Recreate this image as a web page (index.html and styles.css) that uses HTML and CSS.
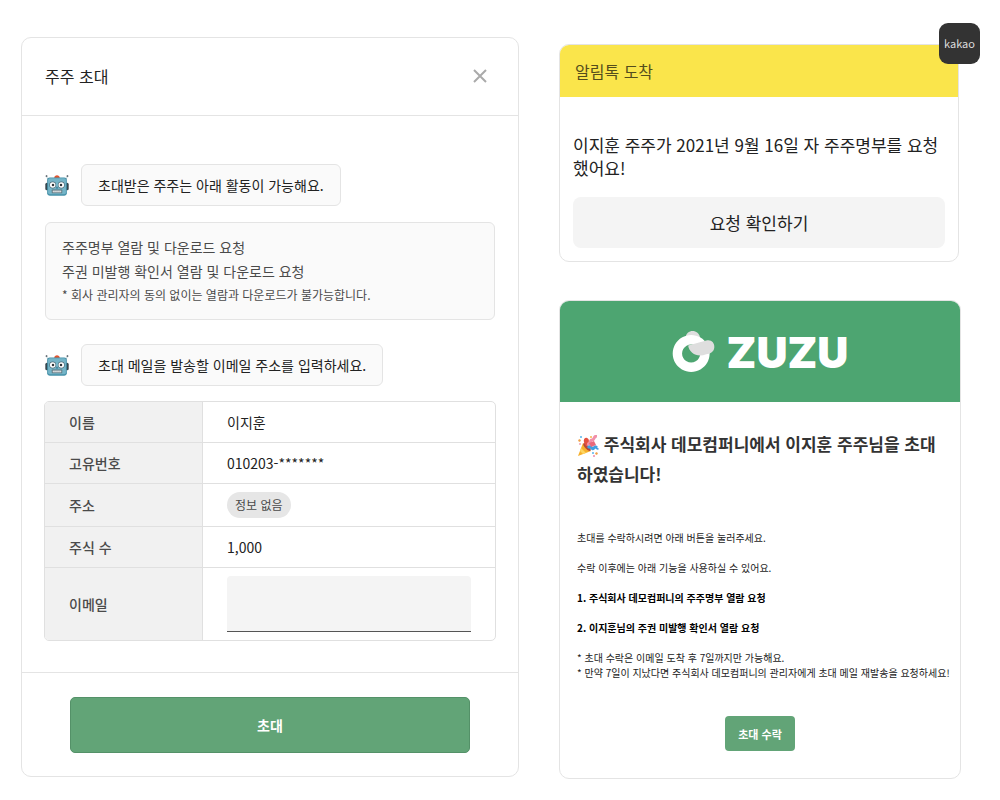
FILE: index.html
```
<!DOCTYPE html>
<html lang="ko">
<head>
    <meta charset="UTF-8">
    <meta name="viewport" content="width=device-width, initial-scale=1.0">
    <title>주주 초대</title>
    <link rel="stylesheet" href="styles.css">
</head>
<body>
    <!-- Shared robot avatar -->
    <svg class="sprite" aria-hidden="true">
        <symbol id="robot" viewBox="12 22 78 74">
            <circle cx="17" cy="30" r="3" fill="#37404a"/>
            <circle cx="85" cy="30" r="3" fill="#37404a"/>
            <path d="M17 31l5 12M85 31l-5 12" stroke="#9fb4bd" stroke-width="2"/>
            <rect x="13" y="52" width="10" height="24" rx="5" fill="#37474f"/>
            <rect x="79" y="52" width="10" height="24" rx="5" fill="#37474f"/>
            <path d="M42 36c0-12 18-12 18 0z" fill="#e2552f"/>
            <rect x="19" y="35" width="64" height="59" rx="8" fill="#4590a8"/>
            <rect x="22" y="37" width="58" height="52" rx="6" fill="#74b4c7"/>
            <circle cx="37" cy="59" r="11" fill="#4f6f7c"/>
            <circle cx="65" cy="59" r="11" fill="#4f6f7c"/>
            <circle cx="37" cy="59" r="9" fill="#fff"/>
            <circle cx="65" cy="59" r="9" fill="#fff"/>
            <circle cx="38" cy="59" r="4" fill="#30363b"/>
            <circle cx="64" cy="59" r="4" fill="#30363b"/>
            <path d="M51 63l4 7h-8z" fill="#35788f"/>
            <rect x="34" y="74" width="34" height="12" rx="2" fill="#5b7680"/>
            <rect x="37" y="77" width="28" height="6" fill="#d9dddf"/>
            <path d="M44 77v6M51 77v6M58 77v6" stroke="#8d999e" stroke-width="1"/>
        </symbol>
    </svg>

    <main class="page">
        <section class="card invite">
            <header class="invite-header">
                <h1>주주 초대</h1>
                <button type="button" class="close-btn" aria-label="닫기">
                    <svg viewBox="0 0 14 14"><path d="M1 1l12 12M13 1L1 13"/></svg>
                </button>
            </header>

            <form id="invite-form" class="invite-body">
                <div class="message">
                    <svg class="avatar"><use href="#robot"/></svg>
                    <p class="bubble">초대받은 주주는 아래 활동이 가능해요.</p>
                </div>

                <div class="notice">
                    <p>주주명부 열람 및 다운로드 요청</p>
                    <p>주권 미발행 확인서 열람 및 다운로드 요청</p>
                    <p class="notice-small">* 회사 관리자의 동의 없이는 열람과 다운로드가 불가능합니다.</p>
                </div>

                <div class="message">
                    <svg class="avatar"><use href="#robot"/></svg>
                    <p class="bubble">초대 메일을 발송할 이메일 주소를 입력하세요.</p>
                </div>

                <table class="info">
                    <tbody>
                        <tr>
                            <th scope="row">이름</th>
                            <td>이지훈</td>
                        </tr>
                        <tr>
                            <th scope="row">고유번호</th>
                            <td>010203-*******</td>
                        </tr>
                        <tr>
                            <th scope="row">주소</th>
                            <td><span class="tag">정보 없음</span></td>
                        </tr>
                        <tr>
                            <th scope="row">주식 수</th>
                            <td>1,000</td>
                        </tr>
                        <tr>
                            <th scope="row"><label for="email">이메일</label></th>
                            <td><input type="email" id="email" name="email"></td>
                        </tr>
                    </tbody>
                </table>
            </form>

            <footer class="invite-footer">
                <button type="submit" form="invite-form" class="submit-btn">초대</button>
            </footer>
        </section>

        <div class="side">
            <section class="card talk">
                <span class="kakao-badge">kakao</span>
                <h2 class="talk-header">알림톡 도착</h2>
                <div class="talk-body">
                    <p>이지훈 주주가 2021년 9월 16일 자 주주명부를 요청<br>했어요!</p>
                    <button type="button" class="talk-btn">요청 확인하기</button>
                </div>
            </section>

            <section class="card mail">
                <header class="mail-header">
                    <svg class="logo-mark" viewBox="36 30 128 128" aria-hidden="true">
                        <path d="M76 54C78 26 116 26 120 54z" fill="#dedede"/>
                        <path fill="#fff" fill-rule="evenodd" d="M93 45a55 55 0 1 0 .1 0zM93 73a27 27 0 1 1-.1 0z"/>
                        <path d="M84 76L138 61C153 57 163 68 162 81C161 96 148 101 138 102C112 112 88 100 84 76z" fill="#dedede"/>
                    </svg>
                    <span class="logo-text">ZUZU</span>
                </header>
                <div class="mail-body">
                    <h2>
                        <svg class="popper" viewBox="0 0 22 22" aria-hidden="true">
                            <path d="M6 8L1 21l13-5z" fill="#f6b02c"/>
                            <path d="M4 13l5 5-3 1-3-3z" fill="#fdd561"/>
                            <ellipse cx="10" cy="12" rx="2" ry="5" transform="rotate(-42 10 12)" fill="#b5483c"/>
                            <path d="M9 11C5 6 7 2 10 3s2 5 0 8" fill="#e4503f"/>
                            <path d="M10 9c5 1 2-4 5-4s1-4 5-4" fill="none" stroke="#f18fa9" stroke-width="3"/>
                            <path d="M11 13c3-4 4 3 6 0s3 1 4 0" fill="none" stroke="#409fe0" stroke-width="3"/>
                            <path d="M12 8l5-2 2 4-5 2z" fill="#e9697a"/>
                            <path d="M1 5l2-1 1 2-2 1zM19 17l2 1-1 2-2-1z" fill="#f0a047"/>
                            <circle cx="4" cy="2" r="1" fill="#55b4ec"/>
                            <circle cx="14" cy="2" r="1" fill="#f3b64b"/>
                            <circle cx="16" cy="18" r="1" fill="#55b4ec"/>
                            <circle cx="17" cy="21" r="1" fill="#ee89ad"/>
                            <circle cx="3" cy="9" r="1" fill="#f2a0b4"/>
                        </svg>
                        주식회사 데모컴퍼니에서 이지훈 주주님을 초대<br>하였습니다!
                    </h2>
                    <p>초대를 수락하시려면 아래 버튼을 눌러주세요.</p>
                    <p>수락 이후에는 아래 기능을 사용하실 수 있어요.</p>
                    <p class="strong">1. 주식회사 데모컴퍼니의 주주명부 열람 요청</p>
                    <p class="strong">2. 이지훈님의 주권 미발행 확인서 열람 요청</p>
                    <p>* 초대 수락은 이메일 도착 후 7일까지만 가능해요.<br>* 만약 7일이 지났다면 주식회사 데모컴퍼니의 관리자에게 초대 메일 재발송을 요청하세요!</p>
                    <button type="button" class="accept-btn">초대 수락</button>
                </div>
            </section>
        </div>
    </main>
</body>
</html>
```
FILE: styles.css
```
* {
    margin: 0;
    padding: 0;
    box-sizing: border-box;
}

body {
    font-family: "Noto Sans CJK KR", "Noto Sans", sans-serif;
    font-size: 14px;
    line-height: 24px;
    color: #222;
    background: #fff;
}

button,
input {
    font-family: inherit;
    border: none;
}

button {
    cursor: pointer;
}

.sprite {
    position: absolute;
    width: 0;
    height: 0;
}

.page {
    display: grid;
    grid-template-columns: minmax(0, 498fr) minmax(0, 402fr);
    gap: 40px;
    align-items: start;
    padding: 37px 39px 23px 21px;
}

.card {
    border: 1px solid #e4e4e4;
    border-radius: 10px;
    background: #fff;
}

/* Invite dialog */
.invite-header {
    display: flex;
    align-items: center;
    justify-content: space-between;
    padding: 26px 31px 27px 23px;
    border-bottom: 1px solid #e4e4e4;
}

.invite-header h1 {
    font-size: 16px;
    font-weight: 400;
}

.close-btn {
    width: 14px;
    height: 14px;
    background: none;
}

.close-btn svg {
    display: block;
    stroke: #aaa;
    stroke-width: 2;
}

.invite-body {
    padding: 48px 23px 31px;
}

.message {
    display: flex;
    align-items: center;
    gap: 12px;
}

.avatar {
    flex: none;
    width: 24px;
    height: 24px;
}

.bubble,
.notice {
    border: 1px solid #e4e4e4;
    border-radius: 6px;
    background: #fafafa;
}

.bubble {
    padding: 8px 16px;
}

.notice {
    margin: 16px 0 24px;
    padding: 12px 16px;
    color: #4a4a4a;
}

.notice-small {
    font-size: 12px;
}

.info {
    width: calc(100% + 2px);
    margin: 15px -1px 0;
    border: 1px solid #e0e0e0;
    border-radius: 5px;
    border-spacing: 0;
    overflow: hidden;
}

.info th,
.info td {
    padding: 8px 24px;
    text-align: left;
}

.info th {
    width: 158px;
    border-right: 1px solid #e0e0e0;
    background: #f1f1f1;
    color: #4a4a4a;
    font-weight: 500;
}

.info tr + tr th,
.info tr + tr td {
    border-top: 1px solid #e0e0e0;
}

.info input {
    display: block;
    width: 100%;
    height: 56px;
    padding: 0 16px;
    border-bottom: 1px solid #555;
    border-radius: 4px 4px 0 0;
    background: #f4f4f4;
    font-size: 14px;
}

.tag {
    display: block;
    width: fit-content;
    padding: 0 8px;
    border-radius: 13px;
    background: #e6e6e6;
    color: #4a4a4a;
    font-size: 12px;
    line-height: 26px;
}

.invite-footer {
    padding: 24px 48px 23px;
    border-top: 1px solid #e4e4e4;
}

.submit-btn {
    display: block;
    width: 100%;
    height: 56px;
    border: 1px solid #549168;
    border-radius: 5px;
    background: #62a477;
    color: #fff;
    font-size: 14px;
    font-weight: 700;
}

/* Kakao notification */
.side {
    display: grid;
    grid-template-columns: minmax(0, 1fr);
    gap: 38px;
    padding-top: 7px;
}

.talk {
    position: relative;
    margin-right: 2px;
}

.kakao-badge {
    position: absolute;
    top: -22px;
    right: -22px;
    width: 41px;
    border-radius: 9px;
    background: #333;
    color: #ddd;
    font-size: 11px;
    line-height: 41px;
    text-align: center;
}

.talk-header {
    padding: 0 15px;
    border-radius: 9px 9px 0 0;
    background: #fae54b;
    color: #544d1c;
    font-size: 16px;
    font-weight: 400;
    line-height: 52px;
}

.talk-body {
    padding: 36px 13px 13px;
}

.talk-body p {
    font-size: 17px;
    line-height: 23px;
    white-space: nowrap;
}

.talk-btn {
    display: block;
    width: 100%;
    height: 51px;
    margin-top: 18px;
    border-radius: 8px;
    background: #f4f4f4;
    color: #222;
    font-size: 17px;
}

/* Invitation mail */
.mail {
    overflow: hidden;
}

.mail-header {
    display: flex;
    align-items: center;
    justify-content: center;
    gap: 12px;
    height: 101px;
    background: #4da571;
}

.logo-mark {
    width: 43px;
    height: 43px;
}

.logo-text {
    color: #fff;
    font-family: Inter, sans-serif;
    font-size: 43px;
    font-weight: 900;
    line-height: 48px;
}

.mail-body {
    padding: 27px 17px;
    font-size: 10px;
    line-height: 15px;
}

.mail-body h2 {
    margin-bottom: 41px;
    color: #333;
    font-size: 17px;
    line-height: 30px;
    white-space: nowrap;
}

.popper {
    width: 22px;
    height: 22px;
    vertical-align: middle;
}

.mail-body p {
    margin-bottom: 15px;
    white-space: nowrap;
}

.mail-body .strong {
    color: #000;
    font-weight: 700;
}

.accept-btn {
    display: block;
    width: 70px;
    height: 35px;
    margin: 36px auto 0;
    border-radius: 4px;
    background: #62a477;
    color: #fff;
    font-size: 11px;
    font-weight: 700;
}

@media (max-width: 980px) {
    .page {
        grid-template-columns: minmax(0, 1fr);
    }

    .talk-body p,
    .mail-body h2,
    .mail-body p {
        white-space: normal;
    }
}
```
